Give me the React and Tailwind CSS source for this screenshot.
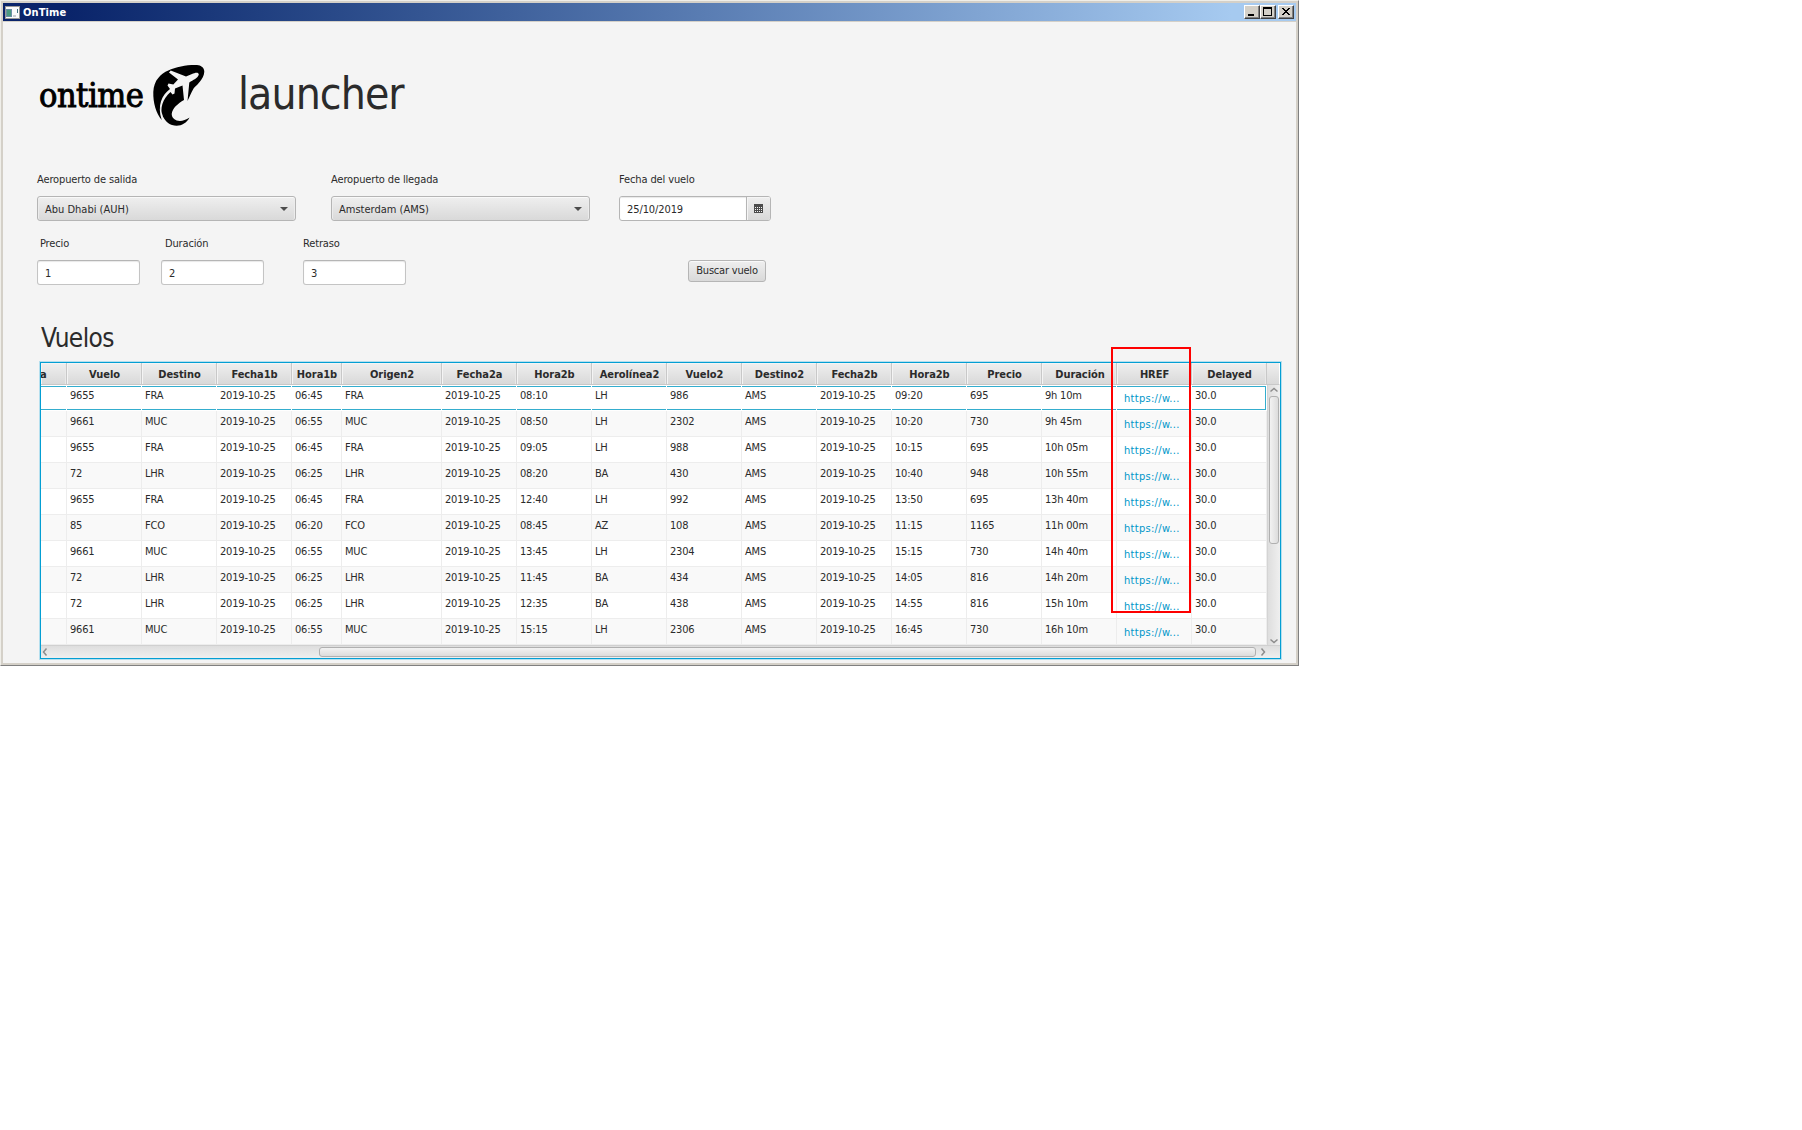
const COLUMNS = [
  { label: 'Vuelo', width: 'w-[75px]' },
  { label: 'Destino', width: 'w-[75px]' },
  { label: 'Fecha1b', width: 'w-[75px]' },
  { label: 'Hora1b', width: 'w-[50px]' },
  { label: 'Origen2', width: 'w-[100px]' },
  { label: 'Fecha2a', width: 'w-[75px]' },
  { label: 'Hora2b', width: 'w-[75px]' },
  { label: 'Aerolínea2', width: 'w-[75px]' },
  { label: 'Vuelo2', width: 'w-[75px]' },
  { label: 'Destino2', width: 'w-[75px]' },
  { label: 'Fecha2b', width: 'w-[75px]' },
  { label: 'Hora2b', width: 'w-[75px]' },
  { label: 'Precio', width: 'w-[75px]' },
  { label: 'Duración', width: 'w-[75px]', shift: 'pl-[2px]' },
  { label: 'HREF', width: 'w-[75px]', link: true },
  { label: 'Delayed', width: 'w-[75px]' },
];

const DATE = '2019-10-25';

const FLIGHTS = [
  ['9655', 'FRA', '06:45', '08:10', 'LH', '986', '09:20', '695', '9h 10m'],
  ['9661', 'MUC', '06:55', '08:50', 'LH', '2302', '10:20', '730', '9h 45m'],
  ['9655', 'FRA', '06:45', '09:05', 'LH', '988', '10:15', '695', '10h 05m'],
  ['72', 'LHR', '06:25', '08:20', 'BA', '430', '10:40', '948', '10h 55m'],
  ['9655', 'FRA', '06:45', '12:40', 'LH', '992', '13:50', '695', '13h 40m'],
  ['85', 'FCO', '06:20', '08:45', 'AZ', '108', '11:15', '1165', '11h 00m'],
  ['9661', 'MUC', '06:55', '13:45', 'LH', '2304', '15:15', '730', '14h 40m'],
  ['72', 'LHR', '06:25', '11:45', 'BA', '434', '14:05', '816', '14h 20m'],
  ['72', 'LHR', '06:25', '12:35', 'BA', '438', '14:55', '816', '15h 10m'],
  ['9661', 'MUC', '06:55', '15:15', 'LH', '2306', '16:45', '730', '16h 10m'],
].map(([flight, via, dep1, dep2, airline, flight2, arr, price, length]) => [
  flight, via, DATE, dep1, via, DATE, dep2, airline, flight2, 'AMS', DATE, arr, price, length, 'https://w...', '30.0',
]);

function WindowButton({ children }) {
  return (
    <span className="flex h-[14px] w-4 border-t border-l border-r border-b border-t-white border-l-white border-r-[#404040] border-b-[#404040] bg-[#d4d0c8] shadow-[inset_-1px_-1px_0_#808080]">
      <svg width="14" height="12" viewBox="0 0 14 12" shapeRendering="crispEdges">{children}</svg>
    </span>
  );
}

function TitleBar() {
  return (
    <div className="flex h-[18px] items-center bg-linear-to-r from-[#0a246a] from-5% to-[#a6caf0] to-95% pl-[2px] pr-[2px]">
      <svg width="15" height="13" viewBox="0 0 15 13" shapeRendering="crispEdges">
        <rect width="15" height="13" fill="#9a9a98" />
        <rect x="1" y="1" width="13" height="11" fill="#fbfbfb" />
        <rect x="1" y="3" width="6" height="8" fill="#6d8fa6" />
        <rect x="2" y="4" width="4" height="6" fill="#4b9a80" />
        <rect x="12" y="3" width="1" height="4" fill="#3f7480" />
        <rect x="8" y="9" width="3" height="2" fill="#c9ced2" />
      </svg>
      <span className="ml-[3px] pt-px text-[11px] leading-[18px] font-bold tracking-[0.1px] text-white">OnTime</span>
      <div className="ml-auto flex">
        <WindowButton><rect x="3" y="8" width="6" height="2" fill="#000" /></WindowButton>
        <WindowButton>
          <path d="M2 1h9v9h-9zM3 3v6h7v-6z" fill="#000" fillRule="evenodd" />
        </WindowButton>
        <span className="w-[2px]" />
        <WindowButton>
          <path d="M3 2h2v1h1v1h2v-1h1v-1h2v1h-1v1h-1v1h-1v1h1v1h1v1h1v1h-2v-1h-1v-1h-2v1h-1v1h-2v-1h1v-1h1v-1h1v-1h-1v-1h-1v-1h-1z" fill="#000" />
        </WindowButton>
      </div>
    </div>
  );
}

function Logo() {
  return (
    <div className="flex h-[62px] w-[168px]">
      <span className="-ml-px w-[113px] pt-[10px] font-['DejaVu_Serif_Condensed','DejaVu_Serif',serif] text-[34px] leading-[42px] tracking-[-0.5px] text-black [-webkit-text-stroke:0.9px_black]">ontime</span>
      <svg width="54" height="64" viewBox="152 64 54 64">
        <path d="M161.700 120C156 113 153 103 153.300 92C153.500 86 155.500 81 158.300 78C161 74.500 164.500 72 168.300 70.500C176 66.500 189 64.500 197 65C201 65.300 204.300 67.500 204.300 71.700C204 76 202 79 200 81.500C197 85.500 195 86.500 193.300 89C191 93 189.500 97 187.500 101L189.300 82.500C193 80 198 78 198.800 74.500C198.500 71.500 194.500 73 192 74L186 76.500L170.700 70.500L169 72.500L178 79.500L173.300 84.500L168.500 83.500L167.500 85.500L170 89C162 95 157 105 161.700 120Z" fill="#000" />
        <path d="M163 116.500C159.500 108 162.500 99.500 170.500 92L172.500 94.500L174.500 93.500L175 88.500L182.500 85.500L184 100C178 103.500 172.500 108 171.700 114C172 121 181 123.500 189.500 117.500C186 124.500 179 127 172 125C167 123.500 160.500 117 161 106C160.500 110 161.500 113.500 163 116.500Z" fill="#000" />
      </svg>
    </div>
  );
}

function Select({ label, value }) {
  return (
    <div className="w-[259px]">
      <div className="text-[11px] leading-[17px] tracking-[-0.14px]">{label}</div>
      <div className="mt-[8px] flex h-[25px] items-center justify-between rounded-[3px] border border-[#b5b5b5] bg-linear-to-b from-[#efefef] to-[#d9d9d9] pr-[7px] pl-[7px] shadow-[inset_0_1px_0_#f9f9f9,inset_1px_0_0_#ececec,inset_-1px_0_0_#ececec]">
        <span className="pt-[2px] text-[11px] leading-4 tracking-[0px]">{value}</span>
        <svg width="8" height="4" viewBox="0 0 8 4"><path d="M0 0H8L4 4Z" fill="#4c4c4c" /></svg>
      </div>
    </div>
  );
}

function Field({ label, value, labelClass }) {
  return (
    <div className="w-[103px]">
      <div className={`text-[11px] leading-[17px] tracking-[-0.15px] ${labelClass}`}>{label}</div>
      <div className="mt-[8px] flex h-[25px] items-center rounded-[3px] border border-[#c4c4c4] border-t-[#b5b5b5] bg-white pt-[2px] pl-[7px] text-[11px] leading-4 shadow-[inset_0_1px_1px_#e8e8e8]">{value}</div>
    </div>
  );
}

function DateField() {
  return (
    <div className="w-[152px]">
      <div className="text-[11px] leading-[17px] tracking-[-0.12px]">Fecha del vuelo</div>
      <div className="mt-[8px] flex h-[25px] overflow-hidden rounded-[3px] border border-[#b5b5b5] bg-white">
        <span className="flex flex-1 items-center pt-[2px] pl-[7px] text-[11px] leading-4 tracking-[-0.1px] shadow-[inset_0_1px_1px_#e8e8e8]">25/10/2019</span>
        <span className="flex w-[24px] items-center justify-center border-l border-[#b5b5b5] bg-linear-to-b from-[#efefef] to-[#d9d9d9] shadow-[inset_1px_1px_0_#f5f5f5]">
          <svg width="9" height="9" viewBox="0 0 9 9" shapeRendering="crispEdges">
            <rect width="9" height="9" fill="#4c4c4c" />
            <path d="M1 3.500H8M1 5.500H8M1 7.500H8" stroke="#f4f4f4" strokeDasharray="1 1" />
          </svg>
        </span>
      </div>
    </div>
  );
}

const HEAD_CELL =
  'h-[22px] shrink-0 overflow-hidden border-r border-b border-[#c8c8c8] bg-linear-to-b from-[#efefef] to-[#d9d9d9] text-center text-[11px] leading-[23px] font-bold tracking-[-0.05px] shadow-[inset_1px_1px_0_#f4f4f4,inset_-1px_0_0_#e9e9e9]';

function FlightRow({ cells, index }) {
  const focused = index === 0;
  const tone = index % 2 ? 'bg-[#f9f9f9]' : 'bg-white';
  const edge = focused ? 'border-white pt-px' : 'border-[#ededed]';
  const inner = focused ? 'h-6 border-t border-b border-[#34adce]' : 'h-full';
  const lead = focused ? 'leading-[17px]' : 'leading-[21px]';
  return (
    <div className={`flex h-[26px] w-[1226px] ${tone}`}>
      <div className={`w-[26px] border-r border-b ${edge}`}><div className={inner} /></div>
      {cells.map((cell, i) => (
        <div key={i} className={`shrink-0 overflow-hidden border-r border-b text-[11px] tracking-[-0.2px] ${COLUMNS[i].width} ${edge}`}>
          <div className={`${inner} ${lead} ${focused && i === cells.length - 1 ? 'border-r' : ''} ${COLUMNS[i].link ? 'pl-[7px] text-[#0096c9]' : 'pl-[3px]'}`}>
            <span className={COLUMNS[i].link ? 'relative top-[3px] tracking-[0.3px]' : ''}>{cell}</span>
          </div>
        </div>
      ))}
    </div>
  );
}

function Chevron({ d, className }) {
  return (
    <svg className={className} width="8" height="8" viewBox="0 0 8 8" fill="none" stroke="#8c8c8c" strokeWidth="1.500"><path d={d} /></svg>
  );
}

function FlightTable() {
  return (
    <div className="relative mt-[9px] ml-[37px] h-[297px] w-[1241px] border border-[#039ed3] bg-white shadow-[0_0_0_1px_#b5dfee]">
      <div className="flex h-[22px]">
        <div className={`${HEAD_CELL} flex w-[26px]`}><span className="-ml-px">a</span></div>
        {COLUMNS.map((c, i) => (
          <div key={i} className={`${HEAD_CELL} ${c.width} ${c.shift ?? 'pl-px'}`}>{c.label}</div>
        ))}
        <div className="flex-1 border-r border-b border-r-white border-b-[#c8c8c8] bg-linear-to-b from-[#efefef] to-[#d9d9d9]" />
      </div>
      <div className="flex h-[260px]">
        <div>
          {FLIGHTS.map((cells, i) => <FlightRow key={i} cells={cells} index={i} />)}
        </div>
        <div className="flex w-[13px] flex-col items-center border-l border-[#d4d4d4] bg-linear-to-r from-[#dedede] to-[#efefef]">
          <Chevron className="-mt-px h-[12px]" d="M0.500 5.500L4 2.500L7.500 5.500" />
          <div className="h-[148px] w-[10px] rounded-[3px] border border-[#b0b0b0] bg-linear-to-r from-[#f2f2f2] to-[#dcdcdc]" />
          <Chevron className="mt-auto" d="M0.500 2.500L4 5.500L7.500 2.500" />
        </div>
      </div>
      <div className="flex h-[13px] items-center border-t border-[#d0d0d0] bg-linear-to-b from-[#dedede] to-[#efefef]">
        <Chevron d="M5.500 0.500L2.500 4L5.500 7.500" />
        <div className="ml-[270px] h-[10px] w-[937px] rounded-[3px] border border-[#b0b0b0] bg-linear-to-b from-[#f2f2f2] to-[#dcdcdc]" />
        <Chevron className="ml-[3px]" d="M2.500 0.500L5.500 4L2.500 7.500" />
      </div>
      <div className="absolute -top-[16px] left-[1070px] h-[266px] w-20 border-2 border-[#fe0000]" />
    </div>
  );
}

export default function App() {
  return (
    <div className="h-[1130px] w-full overflow-hidden bg-white font-['DejaVu_Sans_Condensed','DejaVu_Sans',sans-serif] text-[#2b2b2b]">
      <div className="h-[666px] w-[1299px] border-t border-l border-r border-b border-t-[#efeee9] border-l-[#efeee9] border-r-[#808080] border-b-[#808080] bg-[#d4d0c8] pt-[2px] pr-[2px] pb-[2px] pl-[2px]">
        <TitleBar />
        <div className="mt-px h-[641px] bg-[#f4f4f4]">
          <div className="flex h-[149px] pt-[42px] pl-[37px]">
            <Logo />
            <h1 className="ml-[30px] text-[44px] leading-[60px] tracking-[-0.9px]">launcher</h1>
          </div>
          <div className="flex pl-[34px]">
            <Select label="Aeropuerto de salida" value="Abu Dhabi (AUH)" />
            <div className="w-[35px]" />
            <Select label="Aeropuerto de llegada" value="Amsterdam (AMS)" />
            <div className="w-[29px]" />
            <DateField />
          </div>
          <div className="mt-[14px] flex pl-[34px]">
            <Field label="Precio" value="1" labelClass="pl-[3px]" />
            <div className="w-[21px]" />
            <Field label="Duración" value="2" labelClass="pl-[4px]" />
            <div className="w-[39px]" />
            <Field label="Retraso" value="3" labelClass="" />
            <button className="mt-[25px] ml-[282px] h-[22px] w-[78px] rounded-[3px] border border-[#b5b5b5] bg-linear-to-b from-[#efefef] to-[#d9d9d9] text-[11px] leading-5 tracking-[-0.2px] whitespace-nowrap shadow-[inset_0_1px_0_#f9f9f9]">Buscar vuelo</button>
          </div>
          <h2 className="mt-[38px] ml-[38px] h-[30px] text-[26px] leading-[30px] tracking-[-0.6px]">Vuelos</h2>
          <FlightTable />
        </div>
      </div>
    </div>
  );
}
